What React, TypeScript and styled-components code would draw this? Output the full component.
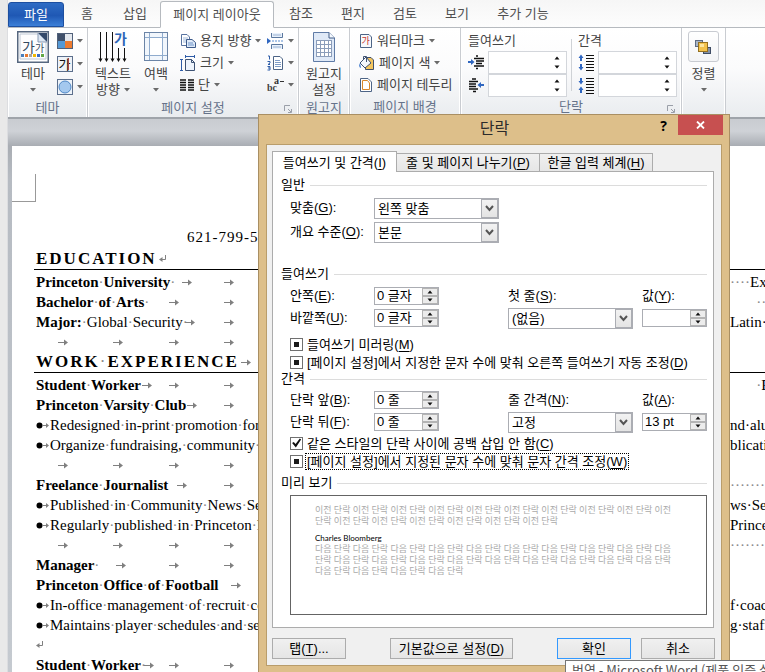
import React, { useEffect, useRef } from "react";
import styled, { createGlobalStyle, css } from "styled-components";

const Global = createGlobalStyle`
  * { box-sizing: border-box; }
  body { margin: 0; overflow: hidden; background: #fff; }
  button, input, select { font: inherit; color: inherit; padding: 0; margin: 0; }
  u { text-underline-offset: 2px; text-decoration-thickness: 1px; }
`;

const KR = `"Liberation Sans", "Noto Sans CJK KR", sans-serif`;
const SERIF = `"Liberation Serif", "Times New Roman", serif`;

const Screen = styled.div`
  position: relative;
  display: flex;
  height: 100vh;
  overflow: hidden;
  font: 400 13px/16px ${KR};
  color: #444;
`;
const Edge = styled.div`
  flex: 0 0 8px;
  background: #e9e9e9;
  border-right: 1px solid #dcdde0;
`;
const Main = styled.div`
  flex: 1;
  min-width: 0;
  display: flex;
  flex-direction: column;
`;

/* ---- ribbon tabs ---- */
const TabBar = styled.nav`
  display: flex;
  align-items: flex-end;
  height: 28px;
  flex: none;
  background: linear-gradient(#f6f6f6, #fdfdfd);
  border-bottom: 1px solid #b6babf;
`;
const RibbonTab = styled.button<{ $w: number; $kind?: "file" | "active" }>`
  width: ${(p) => p.$w}px;
  height: 26px;
  flex: none;
  border: 0;
  background: transparent;
  color: #505050;
  white-space: nowrap;
  ${(p) =>
    p.$kind === "file" &&
    css`
      color: #fff;
      height: 25px;
      border-radius: 3px 3px 0 0;
      border: 1px solid #1d4fa0;
      background: linear-gradient(#2f6cc4, #1f58b4 55%, #3d80d8);
    `}
  ${(p) =>
    p.$kind === "active" &&
    css`
      background: #fff;
      border: 1px solid #b6babf;
      border-bottom-color: #fff;
      border-radius: 3px 3px 0 0;
      margin-bottom: -1px;
      height: 27px;
    `}
`;

/* ---- ribbon body ---- */
const Ribbon = styled.div`
  display: flex;
  flex: none;
  height: 91px;
  background: linear-gradient(#fff, #fbfbfc 45%, #e9ecef);
  border-bottom: 2px solid #9fa4aa;
`;
const Group = styled.section<{ $w: number }>`
  width: ${(p) => p.$w}px;
  flex: none;
  display: flex;
  flex-direction: column;
  border-right: 1px solid #c9ccd1;
  box-shadow: inset -1px 0 #fff, inset 1px 0 #fff;
`;
const GroupBody = styled.div<{ $pad?: number }>`
  flex: 1;
  display: flex;
  padding: 3px 0 0 ${(p) => p.$pad ?? 4}px;
`;
const GroupLabel = styled.div`
  position: relative;
  height: 20px;
  line-height: 19px;
  text-align: center;
  color: #66738a;
`;
const Launcher = styled.button`
  position: absolute;
  right: 5px;
  bottom: 3px;
  width: 9px;
  height: 9px;
  border: 0;
  background: none;
  line-height: 0;
`;
const Big = styled.button<{ $w: number }>`
  width: ${(p) => p.$w}px;
  flex: none;
  border: 0;
  background: none;
  display: flex;
  flex-direction: column;
  align-items: center;
  justify-content: flex-start;
  line-height: 16px;
  white-space: nowrap;
  svg:first-child { margin-bottom: 3px; flex: none; }
`;
const DropLine = styled.span`
  display: flex;
  align-items: center;
  justify-content: center;
  gap: 4px;
  height: 16px;
  svg:first-child { margin: 0; }
`;
const Stack = styled.div<{ $ml?: number; $gap?: number }>`
  display: flex;
  flex-direction: column;
  align-items: flex-start;
  margin-left: ${(p) => p.$ml ?? 0}px;
  gap: ${(p) => p.$gap ?? 2}px;
`;
const Small = styled.button`
  height: 20px;
  border: 0;
  background: none;
  display: flex;
  align-items: center;
  gap: 4px;
  white-space: nowrap;
`;
const Caption = styled.div`
  height: 20px;
  line-height: 20px;
`;
const RibbonField = styled.label`
  display: flex;
  align-items: center;
  height: 23px;
  gap: 3px;
`;
const RibbonSpin = styled.span`
  display: flex;
  width: 79px;
  height: 23px;
  background: #fff;
  border: 1px solid #d3d6db;
  input { flex: 1; min-width: 0; border: 0; background: none; }
`;
const SpinCol = styled.span`
  width: 18px;
  display: flex;
  flex-direction: column;
  align-items: center;
  justify-content: space-evenly;
  button { border: 0; background: none; line-height: 0; }
`;
const Divider = styled.div`
  width: 1px;
  margin: 8px 4px 6px 4px;
  background: #cfd2d6;
`;
const ArrangeTile = styled.span`
  width: 31px;
  height: 31px;
  margin-bottom: 4px;
  display: grid;
  place-items: center;
  border: 1px solid #c8cbd1;
  border-radius: 3px;
  background: linear-gradient(#fff, #f3f4f6);
  svg:first-child { margin: 0; }
`;

const Down = () => (
  <svg width="6" height="4" viewBox="0 0 6 4"><path d="M0 0H6L3 3.5Z" fill="#6a6a6a" /></svg>
);
const Tri = ({ up }: { up?: boolean }) => (
  <svg width="6" height="4" viewBox="0 0 6 4"><path d={up ? "M0.5 3.500H5.500L3 .5Z" : "M0.5 .5H5.500L3 3.500Z"} fill="#111" /></svg>
);

const ThemeIcon = () => (
  <svg width="32" height="32" viewBox="0 0 32 32">
    <rect x=".75" y=".75" width="30.5" height="30.5" fill="#fff" stroke="#56677f" strokeWidth="1.5" />
    <path d="M3 3H22L29 10V28H3Z" fill="#fdfdfe" stroke="#bfc8d4" />
    <path d="M21 2H30V11Z" fill="#34496a" />
    <path d="M21 2V11H30Z" fill="#dce6f2" stroke="#8799b2" />
    <text x="5" y="21" fontSize="14" fontFamily="Noto Sans CJK KR" fill="#34495f">가</text>
    <text x="18" y="21" fontSize="10" fontFamily="Noto Sans CJK KR" fill="#34495f">가</text>
    {["#4a7ebb", "#e8772e", "#a6a6a6", "#f2b800", "#3c6cc4", "#62a744"].map((c, i) => (
      <rect key={c} x={4 + i * 4} y="23" width="3" height="3" fill={c} />
    ))}
  </svg>
);
const ColorsIcon = () => (
  <svg width="16" height="16" viewBox="0 0 16 16">
    <rect width="16" height="16" fill="#51617a" />
    <rect x="1" y="1" width="7" height="7" fill="#40506a" /><rect x="8" y="1" width="7" height="7" fill="#e4e8ee" />
    <rect x="1" y="8" width="7" height="7" fill="#5599d6" /><rect x="8" y="8" width="7" height="7" fill="#ee7c30" />
  </svg>
);
const FontsIcon = () => (
  <svg width="16" height="16" viewBox="0 0 16 16">
    <rect x=".5" y=".5" width="15" height="15" fill="#eef2f8" stroke="#5c6f8c" />
    <text x="1.5" y="13" fontSize="13" fontFamily="Noto Sans CJK KR" fill="#111">가</text>
    <rect x="11" y="2" width="1" height="12" fill="#a8483e" />
  </svg>
);
const EffectsIcon = () => (
  <svg width="16" height="16" viewBox="0 0 16 16">
    <rect x=".5" y=".5" width="15" height="15" fill="#eef3f9" stroke="#5c6f8c" />
    <circle cx="8" cy="8" r="6" fill="#a4c8ee" stroke="#4e87c6" />
  </svg>
);
const TextDirIcon = () => (
  <svg width="30" height="32" viewBox="0 0 30 32">
    <path d="M2.5 1V28M8.500 1V28M14.500 1V28M20.500 17V28M26.500 17V28" stroke="#111" />
    <path d="M.5 27.500H4.500L2.500 31ZM6.500 27.500H10.500L8.500 31ZM12.500 27.500H16.500L14.500 31ZM18.500 27.500H22.500L20.500 31ZM24.500 27.500H28.500L26.500 31Z" fill="#111" />
    <text x="16" y="13" fontSize="14" fontWeight="700" fontFamily="Noto Sans CJK KR" fill="#2d66b8">가</text>
  </svg>
);
const MarginIcon = () => (
  <svg width="26" height="32" viewBox="0 0 26 32">
    <rect x="1.500" y="1.500" width="23" height="28" fill="#f1f6fc" stroke="#6b84a6" />
    <path d="M6.500 2V29M19.500 2V29M2 6.500H24M2 24.500H24" stroke="#8fabcd" />
    <rect x="7" y="7" width="12" height="17" fill="#fff" />
  </svg>
);
const OrientIcon = () => (
  <svg width="16" height="16" viewBox="0 0 16 16">
    <path d="M1.500 1.500H7L9.500 4V12.500H1.500Z" fill="#fff" stroke="#5873a0" />
    <path d="M3 5H8M3 7H8M3 9H8" stroke="#9fb8da" />
    <path d="M6.500 6.500H12L15.500 9.500V14.500H6.500Z" fill="#dfeaf8" stroke="#3d5a8a" />
    <path d="M8 10H13M8 12H14" stroke="#6f93c8" />
  </svg>
);
const SizeIcon = () => (
  <svg width="16" height="16" viewBox="0 0 16 16">
    <path d="M5 1.500H15M5.500 0V3M14.500 0V3M1.500 4V16M0 4.500H3M0 15.500H3" stroke="#2f5da8" />
    <path d="M5.500 4.500H11.500L14.500 7.500V15.500H5.500Z" fill="#eef4fc" stroke="#3d5274" />
    <path d="M11.500 4.500V7.500H14.500" fill="none" stroke="#3d5274" />
  </svg>
);
const ColumnsIcon = () => (
  <svg width="14" height="12" viewBox="0 0 14 12">
    <path d="M0 1H6M0 3.500H6M0 6H6M0 8.500H6M0 11H6M8 1H14M8 3.500H14M8 6H14M8 8.500H14M8 11H14" stroke="#111" strokeWidth="1.300" />
  </svg>
);
const BreakIcon = () => (
  <svg width="17" height="16" viewBox="0 0 17 16">
    <path d="M0 5L4 8L0 11Z" fill="#2f66c0" />
    <path d="M4.500 0V4.500H15.500V0M4.500 16V11.500H15.500V16" fill="#e9f1fb" stroke="#5b789f" />
    <path d="M5 8H17" stroke="#5b8fd2" strokeDasharray="2 1" /><path d="M6 2H14M6 14H14" stroke="#9ab2d2" />
  </svg>
);
const LineNoIcon = () => (
  <svg width="17" height="16" viewBox="0 0 17 16">
    <path d="M1 1H2.500V4.500M.5 6.500H3V8L1 9.500H3M.5 11.500H3V15H.5M1 13H3" fill="none" stroke="#2f5da8" />
    <path d="M6.500 1.500H13L15.500 4V14.500H6.500Z" fill="#fff" stroke="#4d6486" />
    <path d="M8 5.500H13M8 7.500H14M8 9.500H14M8 11.500H14" stroke="#7f9cc6" />
  </svg>
);
const HyphenIcon = () => (
  <svg width="17" height="14" viewBox="0 0 17 14">
    <text x="0" y="13" fontSize="10" fontWeight="700" fontFamily="Liberation Serif" fill="#444">bc</text>
    <text x="7" y="6" fontSize="10" fontWeight="700" fontFamily="Liberation Serif" fill="#333">a</text>
    <path d="M13 3.500H17" stroke="#333" />
  </svg>
);
const GridPaperIcon = () => (
  <svg width="24" height="32" viewBox="0 0 24 32">
    <path d="M1.500 1.500H17L22.500 7V30.500H1.500Z" fill="#dfe9f7" stroke="#5f7ba6" />
    <path d="M17 1.500V7H22.500" fill="#f8fbff" stroke="#3e5a86" />
    <rect x="4" y="9" width="16" height="17" fill="#fff" />
    <path d="M4 9.500H20M4 13.500H20M4 17.500H20M4 21.500H20M4 25.500H20M4.500 9V26M8.500 9V26M12.500 9V26M16.500 9V26M19.500 9V26" stroke="#8b9dba" />
  </svg>
);
const WatermarkIcon = () => (
  <svg width="14" height="16" viewBox="0 0 14 16">
    <path d="M1.500 1.500H10L12.500 4V14.500H1.500Z" fill="#f6f9fd" stroke="#4d6486" />
    <text x="2.500" y="11" fontSize="9" fontFamily="Noto Sans CJK KR" fill="#c8362c">가</text>
  </svg>
);
const PaintIcon = () => (
  <svg width="16" height="16" viewBox="0 0 16 16">
    <path d="M6.500 2.500H12L14.500 5V14.500H6.500Z" fill="#f3c55e" stroke="#41506a" />
    <path d="M1 8L7 2L12 8L6 13Z" fill="#f4f7fb" stroke="#3f5272" />
    <path d="M4.500 5V1.500H7.500V7" fill="none" stroke="#3f5272" />
    <path d="M1 8Q-1 12 2 13Z" fill="#3975c9" />
  </svg>
);
const BorderIcon = () => (
  <svg width="14" height="16" viewBox="0 0 14 16">
    <path d="M1.500 1.500H9L12.500 5V14.500H1.500Z" fill="#fff" stroke="#4d6486" />
    <path d="M3.500 3.500H8.500L10.500 6V12.500H3.500Z" fill="#fff" stroke="#d9882c" />
  </svg>
);
const IndentIcon = ({ right }: { right?: boolean }) => (
  <svg width="17" height="16" viewBox="0 0 17 16">
    {right ? (
      <>
        <path d="M1 3.500H10M1 6H8M1 8.500H8M1 11H10M5 13.500H8M4 1H8" stroke="#111" strokeWidth="1.300" />
        <path d="M9.500 7L13 4V6H16V8H13V10Z" fill="#2f66c0" />
      </>
    ) : (
      <>
        <path d="M6 3.500H16M8 6H16M8 8.500H14M6 11H16M8 13.500H10M8 1H10" stroke="#111" strokeWidth="1.300" />
        <path d="M6.500 7L3 4V6H0V8H3V10Z" fill="#2f66c0" />
      </>
    )}
  </svg>
);
const SpacingIcon = ({ after }: { after?: boolean }) => (
  <svg width="17" height="17" viewBox="0 0 17 17">
    <path d="M8 1.500H16M8 4.500H16M8 7.500H16M8 10.500H16M8 13.500H16M8 16.500H16" stroke="#111" />
    {after ? (
      <path d="M3 7.500L.5 4H2V1H4V4H5.500ZM3 9.500L.5 13H2V16H4V13H5.500Z" fill="#2f66c0" />
    ) : (
      <path d="M3 .5L.5 4H2V7H4V4H5.500ZM3 16.500L.5 13H2V10H4V13H5.500Z" fill="#2f66c0" />
    )}
  </svg>
);
const ArrangeIcon = () => (
  <svg width="17" height="16" viewBox="0 0 17 16">
    <rect x=".5" y="1.500" width="7" height="6" fill="#a9b5c6" stroke="#5d6c84" />
    <rect x="8.500" y="8.500" width="7" height="6" fill="#8491a6" stroke="#3e4c64" />
    <rect x="3.500" y="3.500" width="9" height="9" fill="#f3c24c" stroke="#94701f" />
    <rect x="5" y="5" width="4" height="3" fill="#fde6a0" />
  </svg>
);
const LaunchIcon = () => (
  <svg width="9" height="9" viewBox="0 0 9 9">
    <path d="M.5 6V.5H6M4 4L7 7M7.500 4V7.500H4" fill="none" stroke="#9a9fa8" />
  </svg>
);

const RibbonSpinner = ({ label, icon }: { label: string; icon: React.ReactNode }) => (
  <RibbonField>
    {icon}
    <RibbonSpin>
      <input aria-label={label} />
      <SpinCol>
        <button aria-label={`${label} +`}><Tri up /></button>
        <button aria-label={`${label} -`}><Tri /></button>
      </SpinCol>
    </RibbonSpin>
  </RibbonField>
);

/* ---- document ---- */
const Desk = styled.div`
  flex: 1;
  min-height: 0;
  padding: 27px 0 0 4px;
  background: linear-gradient(#c9ccd1, #cfd2d7 12px, #a9adb3 27px, #b6bbc2 60px, #c5cad0);
`;
const Sheet = styled.article`
  height: 100%;
  overflow: hidden;
  background: #fff;
  color: #000;
  font: 400 15px/20px ${SERIF};
  padding-left: 24px;
`;
const CropMark = styled.div`
  width: 24px;
  height: 56px;
  margin-left: -24px;
  background:
    linear-gradient(#999, #999) right bottom / 1px 28px no-repeat,
    linear-gradient(#999, #999) left bottom / 24px 1px no-repeat;
`;
const Contact = styled.p`
  margin: 25px 0 0 151px;
  height: 22px;
  letter-spacing: 1px;
`;
const Heading = styled.h2`
  display: flex;
  align-items: center;
  gap: 2px;
  height: 21px;
  margin: 0 0 2px -2px;
  padding-left: 2px;
  border-bottom: 1px solid #000;
  font: 700 17px/20px ${SERIF};
  letter-spacing: 2px;
  white-space: nowrap;
`;
const Line = styled.div`
  display: grid;
  grid-template-columns: 694px 1fr;
  height: 20px;
  white-space: nowrap;
`;
const Left = styled.div`
  display: flex;
  align-items: center;
  overflow: hidden;
`;
const Right = styled.div<{ $dots?: boolean }>`
  display: flex;
  align-items: center;
  overflow: hidden;
  white-space: pre;
  color: ${(p) => (p.$dots ? "#888" : "#000")};
`;
const Run = styled.span<{ $w?: number }>`
  flex: none;
  ${(p) => p.$w !== undefined && `width: ${p.$w}px;`}
`;
const Tab = styled.span<{ $w: number }>`
  flex: none;
  width: ${(p) => p.$w}px;
  display: flex;
`;
const Dot = styled.i`
  font-style: normal;
  font-weight: 400;
  color: #888;
`;
const TabArrow = () => (
  <svg width="10" height="7" viewBox="0 0 10 7">
    <path d="M0 3.500H7" stroke="#808080" />
    <path d="M6 .5V6.500L10 3.500Z" fill="#808080" />
  </svg>
);
const ArrowTip = () => (
  <svg width="4" height="7" viewBox="0 0 4 7"><path d="M0 .5V6.500L4 3.500Z" fill="#808080" /></svg>
);
const Return = () => (
  <svg width="8" height="8" viewBox="0 0 8 8">
    <path d="M6.500 0V4.500H1" fill="none" stroke="#808080" /><path d="M3.500 2V7L0 4.500Z" fill="#808080" />
  </svg>
);
const Bullet = () => (
  <svg width="14" height="7" viewBox="0 0 14 7">
    <circle cx="3.500" cy="3.500" r="3" />
    <path d="M7 3.500H11" stroke="#808080" /><path d="M10 1V6L13 3.500Z" fill="#808080" />
  </svg>
);

const marked = (s: string) =>
  s.split(" ").map((word, i) => (
    <React.Fragment key={i}>{i > 0 && <Dot>·</Dot>}{word}</React.Fragment>
  ));

type Row = {
  text?: string; rest?: string; w?: number; tabs?: number[];
  bullet?: boolean; right?: string; lead?: string; tip?: boolean; dots?: boolean; ret?: boolean;
};

const blank: Row = { w: 22, tabs: [55, 56, 55, 55] };
const leader: Row = { right: "···············", dots: true };
const education: Row[] = [
  { text: "Princeton University ", w: 146, tabs: [42, 55], lead: "····", right: "Ex" },
  { text: "Bachelor of Arts ", w: 133, tabs: [55, 55], tip: true, lead: "       ··" },
  { text: "Major:", rest: " Global Security ", w: 149, tabs: [39, 55], right: "Latin·A" },
  blank,
];
const work: Row[] = [
  { text: "Student Worker", w: 106, tabs: [27, 55, 55], tip: true, lead: "       ·", right: "P" },
  { text: "Princeton Varsity Club", w: 151, tabs: [37, 55] },
  { bullet: true, rest: "Redesigned in-print promotion for events", right: "nd·alumni" },
  { bullet: true, rest: "Organize fundraising, community service", right: "blications" },
  blank,
  { text: "Freelance Journalist", w: 141, tabs: [47, 55], ...leader },
  { bullet: true, rest: "Published in Community News Service", right: "ws·Service" },
  { bullet: true, rest: "Regularly published in Princeton Football", right: "Princeton" },
  { ...blank, ...leader },
  { text: "Manager ", w: 80, tabs: [53, 55, 55] },
  { text: "Princeton Office of Football", w: 195, tabs: [55] },
  { bullet: true, rest: "In-office management of recruit contacts", right: "f·coaches" },
  { bullet: true, rest: "Maintains player schedules and service", right: "g·staff" },
  { ret: true },
  { text: "Student Worker ", w: 108, tabs: [25, 55, 55] },
];

const DocLine = ({ row }: { row: Row }) => (
  <Line>
    <Left>
      {row.bullet && <Tab $w={14}><Bullet /></Tab>}
      {row.ret && <Return />}
      <Run $w={row.w}>
        {row.text && <b>{marked(row.text)}</b>}
        {row.rest && marked(row.rest)}
      </Run>
      {row.tabs?.map((w, i) => <Tab key={i} $w={w}><TabArrow /></Tab>)}
    </Left>
    <Right $dots={row.dots}>
      {row.tip && <ArrowTip />}
      {row.lead && <Dot>{row.lead}</Dot>}
      {row.right}
    </Right>
  </Line>
);

/* ---- dialog ---- */
const Dialog = styled.div`
  position: absolute;
  left: 258px;
  top: 114px;
  width: 472px;
  padding: 0 7px 7px;
  background: #ddbf8a;
  border: 1px solid #a98f63;
  color: #000;
`;
const TitleBar = styled.header`
  display: grid;
  grid-template-columns: 1fr auto 1fr;
  height: 29px;
  margin-right: -1px;
`;
const Title = styled.h1`
  grid-column: 2;
  margin: 0;
  font: 400 16px/28px ${KR};
  color: #2b2b2b;
`;
const TitleActions = styled.div`
  display: flex;
  justify-content: flex-end;
  align-items: flex-start;
`;
const Help = styled.button`
  width: 29px;
  height: 22px;
  border: 0;
  background: none;
  font: 700 14px/20px "Open Sans", sans-serif;
`;
const Close = styled.button`
  width: 45px;
  height: 20px;
  border: 0;
  background: #c75050;
  line-height: 0;
`;
const Client = styled.div`
  padding: 6px 7px 6px 5px;
  background: #f0f0f0;
  border: 1px solid #b99d6b;
`;
const DialogTabs = styled.div`
  display: flex;
  align-items: flex-end;
`;
const DialogTab = styled.button<{ $w: number; $on?: boolean }>`
  width: ${(p) => p.$w}px;
  height: ${(p) => (p.$on ? 21 : 18)}px;
  margin: 0 -1px ${(p) => (p.$on ? -1 : 0)}px 0;
  border: 1px solid #acacac;
  border-bottom: 0;
  background: ${(p) => (p.$on ? "#fff" : "linear-gradient(#f0f0f0, #e6e6e6)")};
  position: relative;
  z-index: ${(p) => (p.$on ? 1 : 0)};
  white-space: nowrap;
  line-height: 17px;
`;
const Panel = styled.div`
  border: 1px solid #acacac;
  background: #fff;
  padding: 4px 6px 12px 8px;
`;
const Legend = styled.h2<{ $mt?: number }>`
  display: flex;
  align-items: center;
  gap: 5px;
  height: 18px;
  margin: ${(p) => p.$mt ?? 0}px 0 0;
  font: inherit;
  line-height: 18px;
  &::after { content: ""; flex: 1; height: 1px; background: #dcdcdc; }
`;
const Fields = styled.div<{ $row: number; $mt?: number }>`
  display: grid;
  grid-template-columns: 84px 134px 134px 65px;
  grid-auto-rows: ${(p) => p.$row}px;
  align-items: center;
  margin: ${(p) => p.$mt ?? 1}px 0 0 9px;
`;
const Wrap = styled.span`
  display: flex;
  width: 125px;
  height: 21px;
  border: 1px solid #abadb3;
  background: #fff;
  position: relative;
  select {
    appearance: none;
    width: 100%;
    border: 0;
    background: none;
    padding: 0 20px 0 3px;
    line-height: 17px;
    outline: 0;
  }
`;
const LevelWrap = styled.span`
  grid-column: 2 / -1;
`;
const Chevron = styled.span`
  position: absolute;
  inset: 0 0 0 auto;
  width: 17px;
  display: grid;
  place-items: center;
  border: 1px solid #abadb3;
  background: linear-gradient(#f2f2f2, #e4e4e4);
  pointer-events: none;
`;
const Spin = styled.span`
  display: flex;
  width: 65px;
  height: 18px;
  border: 1px solid #abadb3;
  background: #fff;
  input { flex: 1; min-width: 0; border: 0; padding-left: 2px; background: none; outline: 0; }
`;
const SpinButtons = styled.span`
  display: grid;
  grid-template-rows: 1fr 1fr;
  width: 16px;
  button {
    display: grid;
    place-items: center;
    border: 1px solid #b4b4b4;
    background: #ececec;
    line-height: 0;
  }
`;
const Checks = styled.div<{ $mt: number }>`
  margin: ${(p) => p.$mt}px 0 0 9px;
`;
const CheckRow = styled.label<{ $focus?: boolean }>`
  display: flex;
  align-items: center;
  gap: 3px;
  height: 18px;
  white-space: nowrap;
  span {
    padding: 0 1px;
    line-height: 15px;
    ${(p) => p.$focus && "outline: 1px dotted #000;"}
  }
`;
const Box = styled.input`
  appearance: none;
  flex: none;
  width: 13px;
  height: 13px;
  border: 1px solid #707070;
  background: #fff;
  &:indeterminate { background: linear-gradient(#1a1a1a, #1a1a1a) center / 5px 5px no-repeat #fff; }
  &:checked::before {
    content: "";
    display: block;
    width: 11px;
    height: 11px;
    background: #111;
    clip-path: polygon(10% 50%, 25% 40%, 42% 60%, 80% 8%, 92% 18%, 44% 90%);
  }
`;
const Preview = styled.div`
  height: 120px;
  margin: 3px 0 0 9px;
  padding: 8px 0 0 24px;
  border: 1px solid #646464;
  overflow: hidden;
  font: 400 9px/11px Lato, "Noto Sans CJK KR", sans-serif;
  color: #aaa;
  white-space: nowrap;
  p { margin: 0; }
`;
const Sample = styled.strong`
  display: block;
  margin-top: 7px;
  height: 10px;
  font: 400 8px/10px Lato, sans-serif;
  color: #000;
`;
const Footer = styled.footer`
  display: grid;
  grid-template-columns: 74px 123px 1fr 74px 74px;
  column-gap: 10px;
  margin: 10px -1px 0 0;
`;
const Push = styled.button<{ $primary?: boolean; $col: number }>`
  grid-column: ${(p) => p.$col};
  height: 21px;
  border: 1px solid ${(p) => (p.$primary ? "#3399ff" : "#acacac")};
  background: linear-gradient(#f0f0f0, #e5e5e5);
  line-height: 17px;
  white-space: nowrap;
`;
const Wide = styled(Push)`
  margin: 0 -34px 0 34px;
`;
const Tip = styled.div`
  position: absolute;
  left: 565px;
  right: -10px;
  top: 660px;
  height: 22px;
  padding-left: 6px;
  border: 1px solid #767676;
  background: #fff;
  color: #575757;
  font-family: "Noto Sans CJK KR", sans-serif;
  line-height: 17px;
  white-space: nowrap;
`;

const Key = ({ text, k, end = ":" }: { text: string; k: string; end?: string }) => (
  <>{text}(<u>{k}</u>){end}</>
);
const Combo = ({ id, value }: { id: string; value: string }) => (
  <Wrap>
    <select id={id} defaultValue={value}><option>{value}</option></select>
    <Chevron><svg width="9" height="7" viewBox="0 0 9 7"><path d="M1 1L4.500 5L8 1" fill="none" stroke="#555" strokeWidth="2" /></svg></Chevron>
  </Wrap>
);
const Spinner = ({ id, value }: { id: string; value: string }) => (
  <Spin>
    <input id={id} defaultValue={value} />
    <SpinButtons>
      <button aria-label="늘리기"><Tri up /></button>
      <button aria-label="줄이기"><Tri /></button>
    </SpinButtons>
  </Spin>
);
const Check = ({ text, k, mixed, focus }: { text: string; k: string; mixed?: boolean; focus?: boolean }) => {
  const ref = useRef<HTMLInputElement>(null);
  useEffect(() => { if (ref.current) ref.current.indeterminate = !!mixed; }, [mixed]);
  return (
    <CheckRow $focus={focus}>
      <Box ref={ref} type="checkbox" defaultChecked={!mixed} />
      <span><Key text={text} k={k} end="" /></span>
    </CheckRow>
  );
};
const words = (a: string, b: string, n: number) =>
  Array.from({ length: n }, (_, i) => (i % 2 ? b : a)).join(" ");

const ParagraphDialog = () => (
  <Dialog role="dialog" aria-label="단락">
    <TitleBar>
      <Title>단락</Title>
      <TitleActions>
        <Help>?</Help>
        <Close aria-label="닫기"><svg width="9" height="8" viewBox="0 0 9 8"><path d="M1 .5L8 7.500M8 .5L1 7.500" stroke="#fff" strokeWidth="1.800" /></svg></Close>
      </TitleActions>
    </TitleBar>
    <Client>
      <DialogTabs role="tablist">
        <DialogTab role="tab" aria-selected $w={125} $on><Key text="들여쓰기 및 간격" k="I" end="" /></DialogTab>
        <DialogTab role="tab" $w={144}><Key text="줄 및 페이지 나누기" k="P" end="" /></DialogTab>
        <DialogTab role="tab" $w={114}><Key text="한글 입력 체계" k="H" end="" /></DialogTab>
      </DialogTabs>
      <Panel>
        <Legend>일반</Legend>
        <Fields $row={24} $mt={2}>
          <label htmlFor="align"><Key text="맞춤" k="G" /></label>
          <LevelWrap><Combo id="align" value="왼쪽 맞춤" /></LevelWrap>
          <label htmlFor="level"><Key text="개요 수준" k="O" /></label>
          <LevelWrap><Combo id="level" value="본문" /></LevelWrap>
        </Fields>
        <Legend $mt={21}>들여쓰기</Legend>
        <Fields $row={22} $mt={2}>
          <label htmlFor="inside"><Key text="안쪽" k="E" /></label>
          <Spinner id="inside" value="0 글자" />
          <label htmlFor="first"><Key text="첫 줄" k="S" /></label>
          <label htmlFor="firstval"><Key text="값" k="Y" /></label>
          <label htmlFor="outside"><Key text="바깥쪽" k="U" /></label>
          <Spinner id="outside" value="0 글자" />
          <Combo id="first" value="(없음)" />
          <Spinner id="firstval" value="" />
        </Fields>
        <Checks $mt={6}>
          <Check text="들여쓰기 미러링" k="M" mixed />
          <Check text="[페이지 설정]에서 지정한 문자 수에 맞춰 오른쪽 들여쓰기 자동 조정" k="D" mixed />
        </Checks>
        <Legend $mt={-1}>간격</Legend>
        <Fields $row={22} $mt={1}>
          <label htmlFor="before"><Key text="단락 앞" k="B" /></label>
          <Spinner id="before" value="0 줄" />
          <label htmlFor="leading"><Key text="줄 간격" k="N" /></label>
          <label htmlFor="leadval"><Key text="값" k="A" /></label>
          <label htmlFor="after"><Key text="단락 뒤" k="F" /></label>
          <Spinner id="after" value="0 줄" />
          <Combo id="leading" value="고정" />
          <Spinner id="leadval" value="13 pt" />
        </Fields>
        <Checks $mt={1}>
          <Check text="같은 스타일의 단락 사이에 공백 삽입 안 함" k="C" />
          <Check text="[페이지 설정]에서 지정된 문자 수에 맞춰 문자 간격 조정" k="W" mixed focus />
        </Checks>
        <Legend $mt={4}>미리 보기</Legend>
        <Preview>
          <p>{words("이전", "단락", 19)}</p>
          <p>{words("단락", "이전", 13)}</p>
          <Sample>Charles Bloomberg</Sample>
          <p>{words("다음", "단락", 19)}</p>
          <p>{words("단락", "다음", 19)}</p>
          <p>{words("다음", "단락", 8)}</p>
        </Preview>
      </Panel>
      <Footer>
        <Push $col={1}><Key text="탭" k="T" end="..." /></Push>
        <Wide $col={2}><Key text="기본값으로 설정" k="D" end="" /></Wide>
        <Push $col={4} $primary>확인</Push>
        <Push $col={5}>취소</Push>
      </Footer>
    </Client>
  </Dialog>
);

export default function App() {
  return (
    <Screen>
      <Global />
      <Edge />
      <Main>
        <TabBar>
          <RibbonTab $w={56} $kind="file">파일</RibbonTab>
          <RibbonTab $w={46}>홈</RibbonTab>
          <RibbonTab $w={50}>삽입</RibbonTab>
          <RibbonTab $w={114} $kind="active">페이지 레이아웃</RibbonTab>
          <RibbonTab $w={54}>참조</RibbonTab>
          <RibbonTab $w={50}>편지</RibbonTab>
          <RibbonTab $w={54}>검토</RibbonTab>
          <RibbonTab $w={50}>보기</RibbonTab>
          <RibbonTab $w={82}>추가 기능</RibbonTab>
        </TabBar>
        <Ribbon>
          <Group $w={80}>
            <GroupBody $pad={4}>
              <Big $w={42}><ThemeIcon />테마<DropLine><Down /></DropLine></Big>
              <Stack $ml={3} $gap={3}>
                <Small aria-label="색"><ColorsIcon /><Down /></Small>
                <Small aria-label="글꼴"><FontsIcon /><Down /></Small>
                <Small aria-label="효과"><EffectsIcon /><Down /></Small>
              </Stack>
            </GroupBody>
            <GroupLabel>테마</GroupLabel>
          </Group>
          <Group $w={211}>
            <GroupBody $pad={3}>
              <Big $w={44}><TextDirIcon />텍스트<DropLine>방향<Down /></DropLine></Big>
              <Big $w={42}><MarginIcon />여백<DropLine><Down /></DropLine></Big>
              <Stack $ml={3}>
                <Small><OrientIcon />용지 방향<Down /></Small>
                <Small><SizeIcon />크기<Down /></Small>
                <Small><ColumnsIcon />단<Down /></Small>
              </Stack>
              <Stack $ml={6}>
                <Small aria-label="나누기"><BreakIcon /><Down /></Small>
                <Small aria-label="줄 번호"><LineNoIcon /><Down /></Small>
                <Small aria-label="하이픈 넣기"><HyphenIcon /><Down /></Small>
              </Stack>
            </GroupBody>
            <GroupLabel>페이지 설정<Launcher aria-label="페이지 설정"><LaunchIcon /></Launcher></GroupLabel>
          </Group>
          <Group $w={51}>
            <GroupBody $pad={3}>
              <Big $w={44}><GridPaperIcon />원고지<DropLine>설정</DropLine></Big>
            </GroupBody>
            <GroupLabel>원고지</GroupLabel>
          </Group>
          <Group $w={111}>
            <GroupBody $pad={9}>
              <Stack>
                <Small><WatermarkIcon />워터마크<Down /></Small>
                <Small><PaintIcon />페이지 색<Down /></Small>
                <Small><BorderIcon />페이지 테두리</Small>
              </Stack>
            </GroupBody>
            <GroupLabel>페이지 배경</GroupLabel>
          </Group>
          <Group $w={221}>
            <GroupBody $pad={7}>
              <Stack $gap={0}>
                <Caption>들여쓰기</Caption>
                <RibbonSpinner label="왼쪽 들여쓰기" icon={<IndentIcon />} />
                <RibbonSpinner label="오른쪽 들여쓰기" icon={<IndentIcon right />} />
              </Stack>
              <Divider />
              <Stack $gap={0} $ml={2}>
                <Caption>간격</Caption>
                <RibbonSpinner label="단락 앞 간격" icon={<SpacingIcon />} />
                <RibbonSpinner label="단락 뒤 간격" icon={<SpacingIcon after />} />
              </Stack>
            </GroupBody>
            <GroupLabel>단락<Launcher aria-label="단락"><LaunchIcon /></Launcher></GroupLabel>
          </Group>
          <Group $w={44}>
            <GroupBody $pad={0}>
              <Big $w={43}><ArrangeTile><ArrangeIcon /></ArrangeTile>정렬<DropLine><Down /></DropLine></Big>
            </GroupBody>
          </Group>
        </Ribbon>
        <Desk>
          <Sheet>
            <CropMark />
            <Contact>621-799-5555</Contact>
            <Heading><span>EDUCATION</span><Return /></Heading>
            {education.map((r, i) => <DocLine key={i} row={r} />)}
            <Heading><span>WORK<Dot>·</Dot>EXPERIENCE</span><TabArrow /></Heading>
            {work.map((r, i) => <DocLine key={i} row={r} />)}
          </Sheet>
        </Desk>
      </Main>
      <ParagraphDialog />
      <Tip role="tooltip">번역 - Microsoft Word (제품 인증 실패)</Tip>
    </Screen>
  );
}
